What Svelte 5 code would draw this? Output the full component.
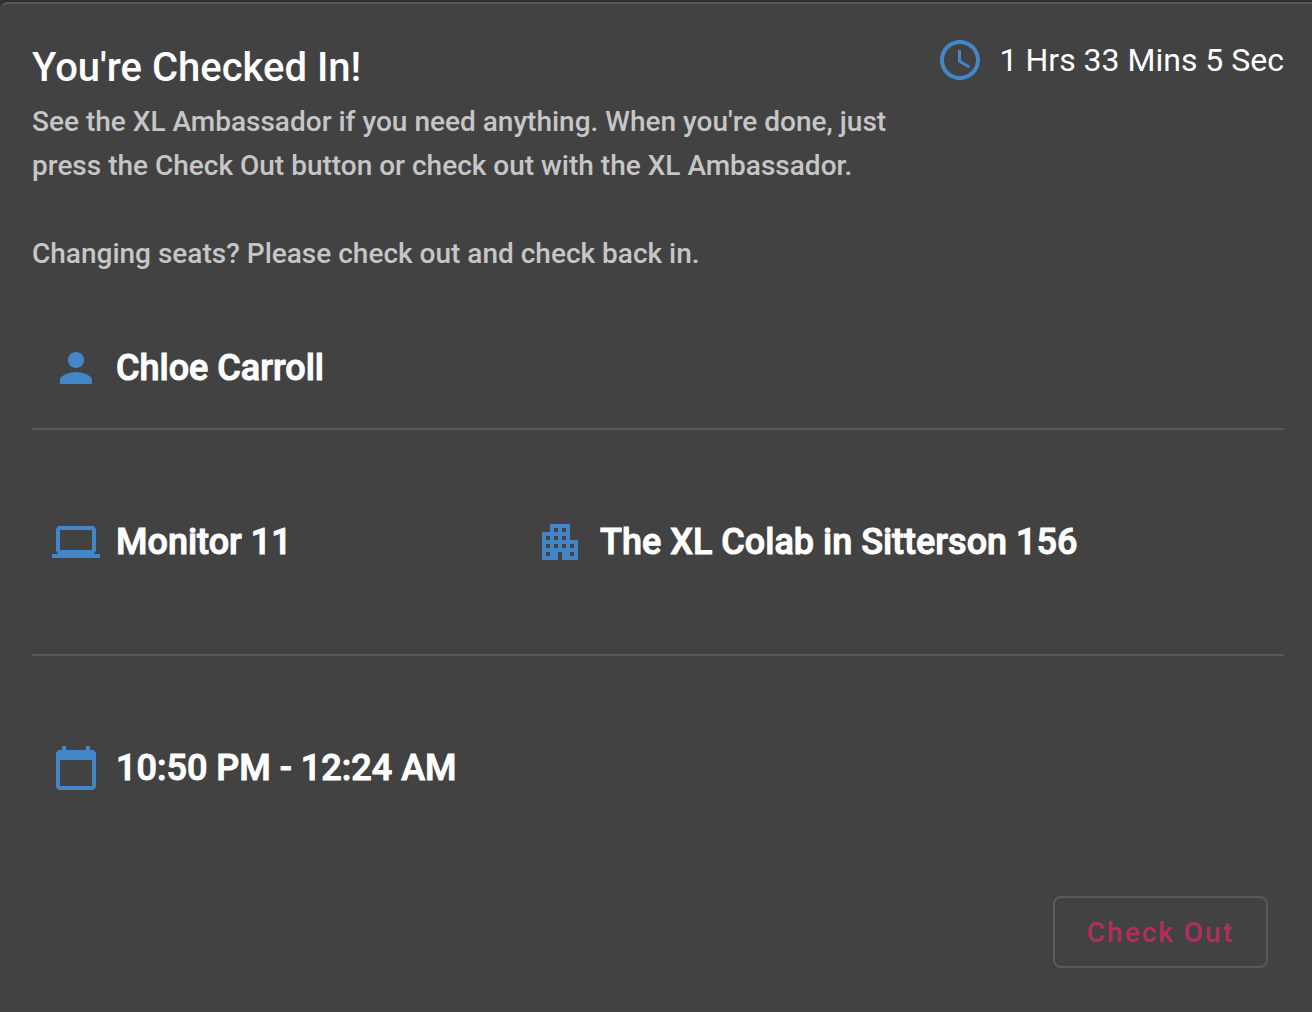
<script lang="ts">
  const seat = 'Monitor 11';
  const room = 'The XL Colab in Sitterson 156';
</script>

<main class="card">
  <header>
    <div class="intro">
      <h1>You're Checked In!</h1>
      <p>See the XL Ambassador if you need anything. When you're done, just press the Check Out button or check out with the XL Ambassador.</p>
      <p>Changing seats? Please check out and check back in.</p>
    </div>
    <div class="timer">
      <svg class="icon" viewBox="0 0 24 24" aria-hidden="true"><path d="M11.99 2C6.47 2 2 6.48 2 12s4.47 10 9.99 10C17.52 22 22 17.52 22 12S17.52 2 11.99 2zM12 20c-4.42 0-8-3.58-8-8s3.58-8 8-8 8 3.58 8 8-3.58 8-8 8zm.5-13H11v6l5.25 3.15.75-1.23-4.5-2.67z" /></svg>
      <span>1 Hrs 33 Mins 5 Sec</span>
    </div>
  </header>

  <section class="row person">
    <div class="item">
      <svg class="icon" viewBox="0 0 24 24" aria-hidden="true"><path d="M12 12c2.21 0 4-1.79 4-4s-1.79-4-4-4-4 1.79-4 4 1.79 4 4 4zm0 2c-2.67 0-8 1.34-8 4v2h16v-2c0-2.66-5.33-4-8-4z" /></svg>
      <span>Chloe Carroll</span>
    </div>
  </section>
  <section class="row place">
    <div class="item">
      <svg class="icon" viewBox="0 0 24 24" aria-hidden="true"><path d="M20 18c1.1 0 1.99-.9 1.99-2L22 6c0-1.1-.9-2-2-2H4c-1.1 0-2 .9-2 2v10c0 1.1.9 2 2 2H0v2h24v-2h-4zM4 6h16v10H4V6z" /></svg>
      <span>{seat}</span>
    </div>
    <div class="item">
      <svg class="icon" viewBox="0 0 24 24" aria-hidden="true"><path d="M17 11V3H7v4H3v14h8v-4h2v4h8V11h-4zM7 19H5v-2h2v2zm0-4H5v-2h2v2zm0-4H5V9h2v2zm4 4H9v-2h2v2zm0-4H9V9h2v2zm0-4H9V5h2v2zm4 8h-2v-2h2v2zm0-4h-2V9h2v2zm0-4h-2V5h2v2zm4 12h-2v-2h2v2zm0-4h-2v-2h2v2z" /></svg>
      <span>{room}</span>
    </div>
  </section>
  <section class="row time">
    <div class="item">
      <svg class="icon" viewBox="0 0 24 24" aria-hidden="true"><path d="M20 3h-1V1h-2v2H7V1H5v2H4c-1.1 0-2 .9-2 2v16c0 1.1.9 2 2 2h16c1.1 0 2-.9 2-2V5c0-1.1-.9-2-2-2zm0 18H4V8h16v13z" /></svg>
      <span>10:50 PM - 12:24 AM</span>
    </div>
  </section>

  <footer><button type="button">Check Out</button></footer>
</main>

<style>
  :global(body) {
    background: #303030;
  }
  .card {
    box-sizing: border-box;
    min-height: calc(100vh - 2px);
    margin-top: 2px;
    padding: 32px 28px 40px 32px;
    border-top: 2px solid #595959;
    border-top-left-radius: 8px;
    background: #424242;
    color: #fff;
    font-family: Roboto, sans-serif;
  }
  header {
    display: flex;
    justify-content: space-between;
    align-items: flex-start;
  }
  .intro {
    flex: 0 1 888px;
  }
  h1 {
    margin: 0;
    font-size: 40px;
    line-height: 64px;
    font-weight: 500;
  }
  p {
    margin: 0 0 44px;
    font-size: 28px;
    line-height: 44px;
    font-weight: 500;
    color: #c6c6c6;
  }
  p:last-child {
    margin-bottom: 32px;
  }
  .timer {
    display: flex;
    align-items: center;
    gap: 16px;
    font-size: 32px;
    line-height: 40px;
    white-space: nowrap;
  }
  .icon {
    flex: none;
    width: 48px;
    height: 48px;
    fill: #4387c9;
  }
  .row {
    display: flex;
    align-items: center;
    border-bottom: 2px solid #5a5a5a;
    padding-left: 20px;
  }
  .person {
    min-height: 120px;
  }
  .place,
  .time {
    min-height: 224px;
  }
  .time {
    border-bottom: 0;
  }
  .item {
    display: flex;
    align-items: center;
    gap: 16px;
    font-size: 36px;
    line-height: 48px;
    font-weight: 500;
    -webkit-text-stroke: 1px;
  }
  .place .item:first-child {
    width: 484px;
  }
  footer {
    display: flex;
    justify-content: flex-end;
    padding: 16px 16px 0 0;
  }
  button {
    height: 72px;
    padding: 0 32px;
    border: 2px solid #5a5a5a;
    border-radius: 8px;
    background: transparent;
    color: #b32d5e;
    font: 500 28px Roboto, sans-serif;
    letter-spacing: 2px;
  }
</style>
